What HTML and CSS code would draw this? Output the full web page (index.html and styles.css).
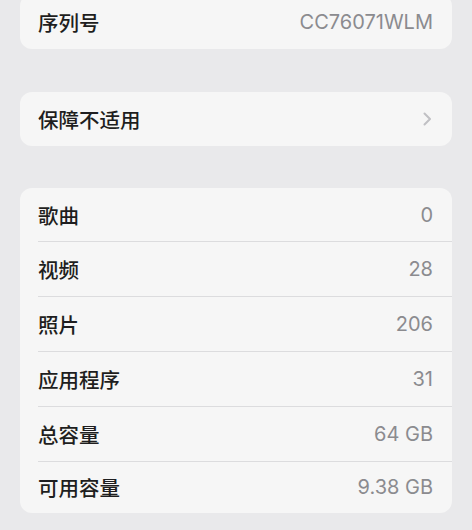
FILE: index.html
```html
<!DOCTYPE html>
<html lang="zh-CN">
<head>
<meta charset="utf-8">
<title>关于本机</title>
<link rel="stylesheet" href="styles.css">
</head>
<body>
<main class="page">
  <section class="card card-top">
    <div class="row"><span class="label">序列号</span><span class="value">CC76071WLM</span></div>
  </section>
  <section class="card card-warranty">
    <div class="row"><span class="label">保障不适用</span>
      <svg class="chev" width="9" height="14" viewBox="0 0 9 14" aria-hidden="true"><path d="M1.5 1.5 L7 7 L1.5 12.5" fill="none" stroke="#c0c0c4" stroke-width="2" stroke-linecap="round" stroke-linejoin="round"/></svg>
    </div>
  </section>
  <section class="card">
    <div class="row"><span class="label">歌曲</span><span class="value">0</span></div>
    <div class="row"><span class="label">视频</span><span class="value">28</span></div>
    <div class="row"><span class="label">照片</span><span class="value">206</span></div>
    <div class="row"><span class="label">应用程序</span><span class="value">31</span></div>
    <div class="row"><span class="label">总容量</span><span class="value">64 GB</span></div>
    <div class="row"><span class="label">可用容量</span><span class="value">9.38 GB</span></div>
  </section>
</main>
</body>
</html>
```
FILE: styles.css
```css
html, body {
  margin: 0;
  padding: 0;
  background: #e9e9eb;
}
body {
  font-family: Inter, "Liberation Sans", "Noto Sans CJK SC", sans-serif;
  height: 530px;
  overflow: hidden;
}
.page {
  display: flex;
  flex-direction: column;
  gap: 42px;
  padding: 0 20px;
  margin-top: -6px;
}
.card {
  background: #f6f6f6;
  border-radius: 12px;
  overflow: hidden;
}
.card-warranty {
  margin-top: 1px;
}
.card-warranty .row {
  height: 54px;
}
.row {
  box-sizing: border-box;
  height: 55px;
  margin-left: 18px;
  padding-right: 19px;
  display: flex;
  align-items: center;
  justify-content: space-between;
  border-bottom: 1px solid #dcdcde;
}
.card > .row:first-child:not(:last-child) {
  height: 54px;
}
.row:last-child {
  border-bottom: none;
}
.card > .row:last-child:not(:first-child) {
  height: 51px;
  padding-bottom: 2px;
}
.label {
  font-family: "Noto Sans CJK SC", sans-serif;
  font-size: 20.5px;
  font-weight: 500;
  color: #1e1e20;
}
.value {
  font-size: 20px;
  color: #8b8b8f;
}
.chev {
  display: block;
  margin-right: 1px;
}
```
